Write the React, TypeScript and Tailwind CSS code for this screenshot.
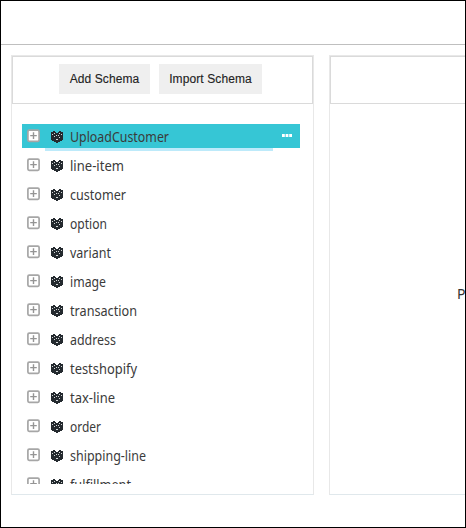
import React from "react";

type Item = { name: string; width: number };

const items: Item[] = [
  { name: "UploadCustomer", width: 99 },
  { name: "line-item", width: 54 },
  { name: "customer", width: 56 },
  { name: "option", width: 37 },
  { name: "variant", width: 41 },
  { name: "image", width: 36 },
  { name: "transaction", width: 67 },
  { name: "address", width: 46 },
  { name: "testshopify", width: 67 },
  { name: "tax-line", width: 45 },
  { name: "order", width: 31 },
  { name: "shipping-line", width: 76 },
  { name: "fulfillment", width: 61 },
];

function Expand() {
  return (
    <svg className="block shrink-0" width="13" height="14" viewBox="0 0 13 14" fill="none">
      <rect x="0.9" y="1.1" width="11.2" height="11.2" rx="1.3" fill="#fff" stroke="#a6a6a6" strokeWidth="1.7" />
      <path d="M3.2 6.6h6.6M6.5 3.3v6.6" stroke="#949494" strokeWidth="1.4" />
    </svg>
  );
}

function Cubes() {
  return (
    <svg className="block shrink-0" width="12" height="12" viewBox="0 0 12 12" shapeRendering="crispEdges">
      <path
        d="M2 0h2v1h1v1h2V1h1V0h2v1h2v8h-1v1H9v1H7v1H5v-1H3v-1H1V9H0V1h2z"
        fill="#242a2f"
      />
      <path
        d="M1 3h1v1H1zM3 2h1v1H3zM8 2h1v1H8zM10 3h1v1h-1zM5 4h1v1H5zM7 4h1v1H7zM3 5h1v1H3zM8 6h1v1H8zM5 8h2v1H5z"
        fill="#d5d7d8"
      />
    </svg>
  );
}

function More() {
  return (
    <svg className="mb-px ml-auto mr-2 block" width="10" height="3" viewBox="0 0 10 3" fill="#fff">
      <rect width="2.8" height="3" />
      <rect x="3.6" width="2.8" height="3" />
      <rect x="7.2" width="2.8" height="3" />
    </svg>
  );
}

function Label({ name, width }: Item) {
  return (
    <svg className="ml-[7px] block shrink-0 overflow-visible" width={width} height="24">
      <text
        x="0"
        y="18"
        textLength={width}
        lengthAdjust="spacingAndGlyphs"
        className="fill-[#3b3b3b] font-['Noto_Sans',sans-serif] text-[13.5px]"
      >
        {name}
      </text>
    </svg>
  );
}

function Row({ item, selected }: { item: Item; selected: boolean }) {
  return (
    <div className={"relative flex h-6 shrink-0 items-center pl-[5px] " + (selected ? "bg-[#36c6d5]" : "")}>
      <Expand />
      <div className="ml-[11px] mt-[2px]">
        <Cubes />
      </div>
      <Label {...item} />
      {selected && (
        <>
          <More />
          <div className="absolute left-[23px] top-6 h-[3px] w-[228px] bg-[#bdeafa]" />
        </>
      )}
    </div>
  );
}

export default function App() {
  return (
    <div className="flex h-[528px] w-[466px] flex-col overflow-hidden border border-black bg-white font-['Liberation_Sans',sans-serif]">
      <header className="h-11 shrink-0 border-b border-[#bfbfbf]" />
      <main className="flex gap-[15px] pl-[10px] pt-[10px]">
        <section className="h-[440px] w-[303px] shrink-0 border border-[#e8e8e8] border-b-[#e0e8ec]">
          <div className="flex h-12 gap-[9px] border border-[#dadada] pl-[46px] pt-[7px] text-[12px] text-[#222]">
            <button className="h-[30px] w-[91px] whitespace-nowrap bg-[#efefef] tracking-[0.1px] [-webkit-text-stroke:0.12px_#222]">Add Schema</button>
            <button className="h-[30px] w-[103px] whitespace-nowrap bg-[#efefef] tracking-[0.1px] [-webkit-text-stroke:0.12px_#222]">Import Schema</button>
          </div>
          <div className="ml-[10px] mt-5 flex h-[360px] w-[278px] flex-col gap-[5px] overflow-hidden">
            {items.map((item, i) => (
              <Row key={item.name} item={item} selected={i === 0} />
            ))}
          </div>
        </section>
        <section className="h-[440px] w-[303px] shrink-0 border border-[#e8e8e8] border-b-[#e0e8ec]">
          <div className="h-12 border border-[#dadada]" />
          <p className="ml-[127px] mt-[180px] font-['Noto_Sans',sans-serif] text-[14px] leading-5 text-[#333]">P</p>
        </section>
      </main>
    </div>
  );
}
